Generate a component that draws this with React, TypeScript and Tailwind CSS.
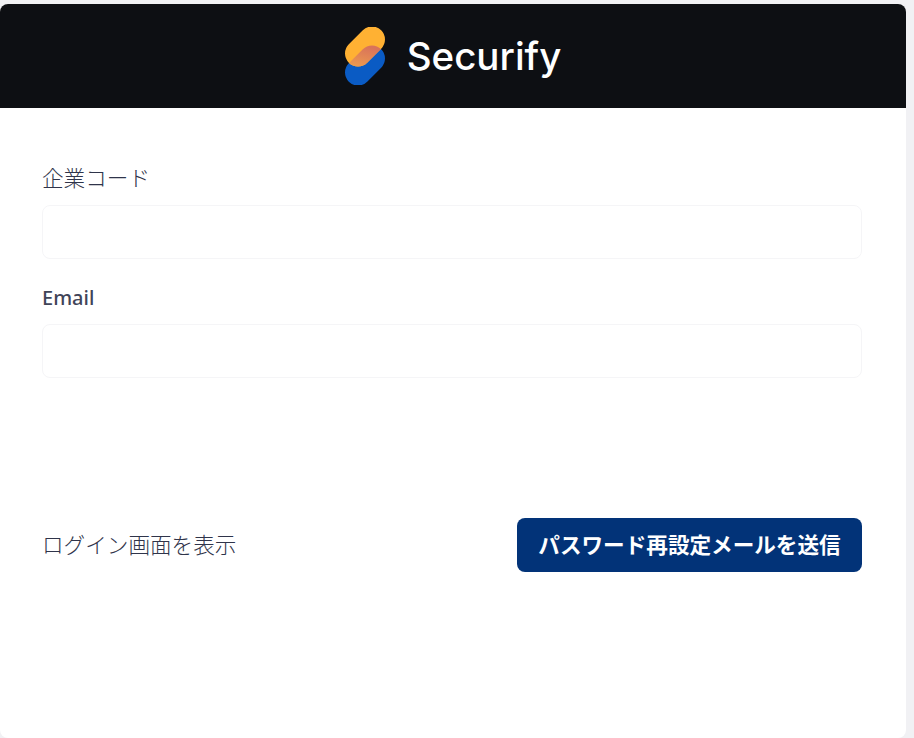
const cjk = "font-['Noto_Sans_CJK_JP','Noto_Sans',sans-serif]";

function Logo() {
  return (
    <svg width="40" height="58" viewBox="0 0 40 58" fill="none">
      <defs>
        <linearGradient id="lens" x1="6" y1="38" x2="32" y2="22" gradientUnits="userSpaceOnUse">
          <stop offset="0" stopColor="#f4a94a" />
          <stop offset="1" stopColor="#d9735a" />
        </linearGradient>
        <clipPath id="top">
          <rect x="-2.9" y="6.5" width="45.8" height="26" rx="13" transform="rotate(-45 20 19.5)" />
        </clipPath>
      </defs>
      <rect x="-2.9" y="25.5" width="45.8" height="26" rx="13" transform="rotate(-45 20 38.5)" fill="#0a5bc4" />
      <rect x="-2.9" y="6.5" width="45.8" height="26" rx="13" transform="rotate(-45 20 19.5)" fill="#ffb133" />
      <g clipPath="url(#top)">
        <rect x="-2.9" y="25.5" width="45.8" height="26" rx="13" transform="rotate(-45 20 38.5)" fill="url(#lens)" />
      </g>
    </svg>
  );
}

export default function App() {
  return (
    <div className="h-[738px] overflow-hidden bg-[#f1f1f4] pt-1 pr-2">
      <div className="h-[734px] overflow-hidden rounded-lg bg-white">
        <header className="flex h-[104px] items-center justify-center gap-[22px] bg-[#0d0f13]">
          <Logo />
          <span className="pt-[2px] font-['Inter',sans-serif] text-[38.5px] font-medium text-white">Securify</span>
        </header>
        <form className="flex flex-col pt-[53px] pr-[44px] pl-[42px]">
          <label className={`${cjk} mb-[12px] text-[21.6px] leading-[32px] font-light text-[#2f344a]`}>企業コード</label>
          <input className="h-[54px] w-full rounded-lg border border-[#f5f5f7] bg-white" />
          <label className="mt-[23px] mb-[10px] font-['Noto_Sans',sans-serif] text-[20px] leading-[32px] font-medium text-[#3f4458]">
            Email
          </label>
          <input className="h-[54px] w-full rounded-lg border border-[#f5f5f7] bg-white" />
          <div className="mt-[140px] flex items-center justify-between">
            <a className={`${cjk} pb-[2px] text-[21.6px] font-light text-[#2f344a]`}>ログイン画面を表示</a>
            <button className={`${cjk} h-[54px] w-[345px] rounded-lg bg-[#023378] pb-[2px] text-[21.6px] font-bold text-white`}>
              パスワード再設定メールを送信
            </button>
          </div>
        </form>
      </div>
    </div>
  );
}
